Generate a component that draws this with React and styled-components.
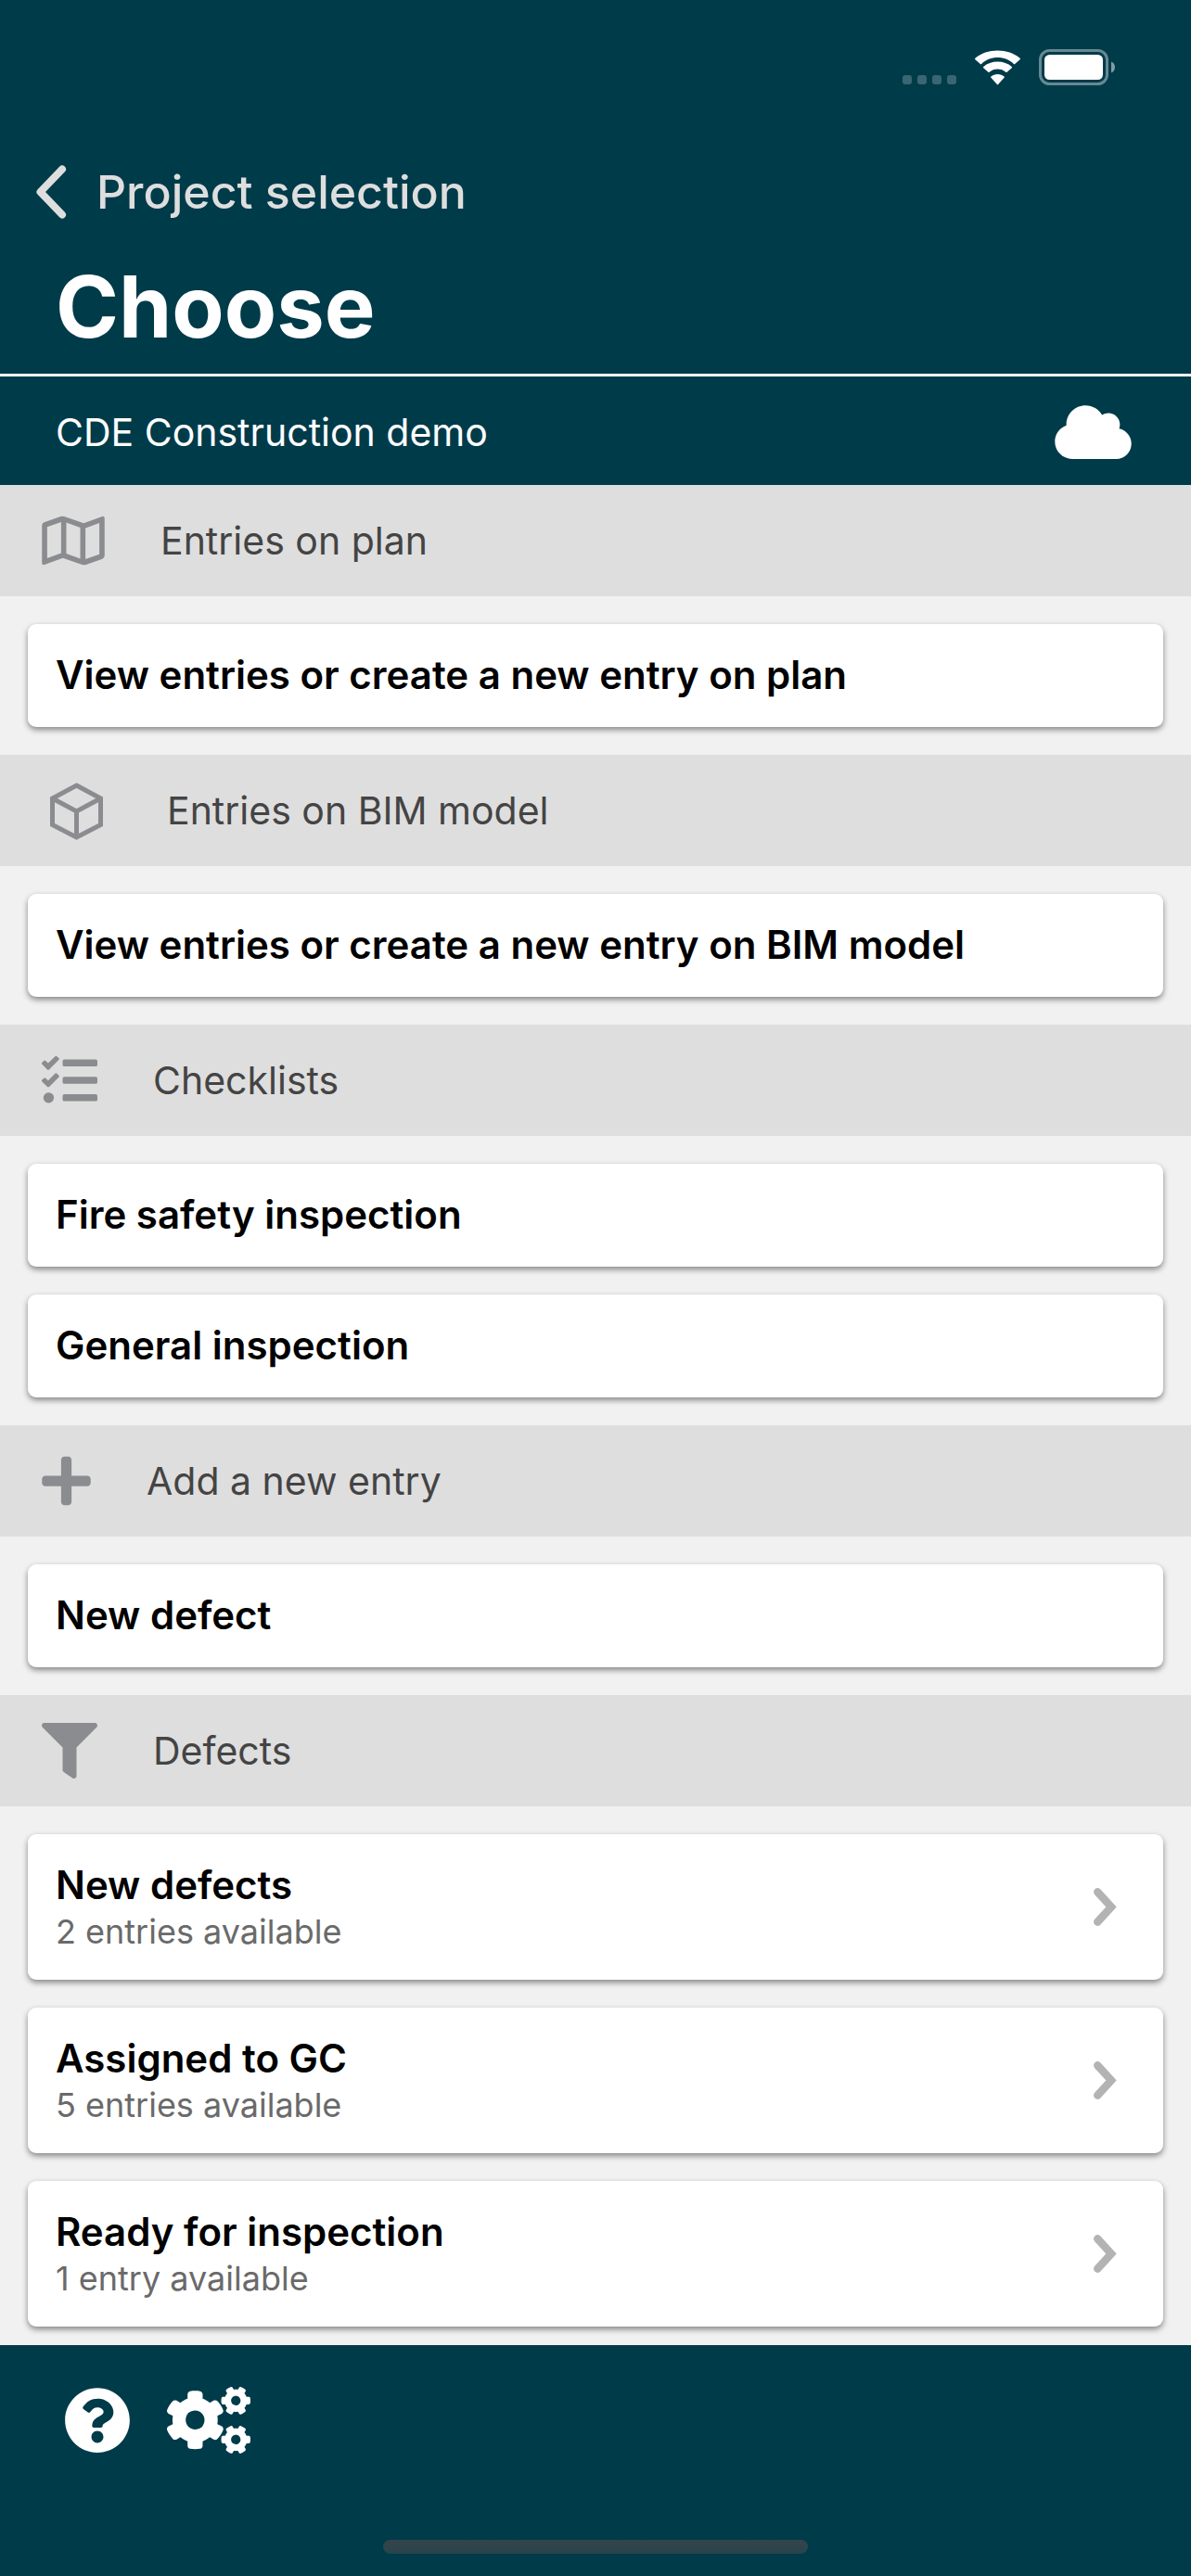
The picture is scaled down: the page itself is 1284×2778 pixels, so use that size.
import styled, { createGlobalStyle } from "styled-components";
import {
  FaCloud,
  FaCogs,
  FaFilter,
  FaPlus,
  FaQuestionCircle,
  FaRegMap,
  FaTasks,
} from "react-icons/fa";

const GlobalStyles = createGlobalStyle`
  :root {
    --color-brand: #003b4a;
    --color-white: #fff;
    --color-grey-50: #f1f1f1;
    --color-grey-200: #dedede;
    --color-grey-400: #b3b3b3;
    --color-grey-500: #8b8c90;
    --color-grey-600: #6a6a6a;
    --color-grey-700: #444;
    --font-size-sm: 36px;
    --font-size-base: 41px;
    --font-size-md: 42px;
    --font-size-lg: 50px;
    --font-size-xl: 92px;
  }

  *, *::before, *::after {
    box-sizing: border-box;
    margin: 0;
    padding: 0;
  }

  body {
    background-color: var(--color-brand);
    font-family: Inter, Roboto, "Liberation Sans", sans-serif;
    font-size: var(--font-size-base);
  }

  button {
    border: none;
    background: none;
    font: inherit;
    color: inherit;
    cursor: pointer;
  }
`;

const StyledApp = styled.div`
  display: flex;
  flex-direction: column;
  height: 100vh;
`;

const StatusBar = styled.div`
  display: flex;
  justify-content: flex-end;
  align-items: flex-end;
  gap: 19px;
  height: 141px;
  padding: 0 82px 49px;
`;

const SignalDots = styled.div`
  display: flex;
  gap: 6px;
  padding-bottom: 1px;

  > span {
    width: 10px;
    height: 10px;
    border-radius: 3px;
    background-color: rgba(255, 255, 255, 0.22);
  }
`;

const Header = styled.header`
  flex-shrink: 0;
  color: var(--color-white);
  border-bottom: 3px solid var(--color-white);
`;

const BackLink = styled.a`
  display: inline-flex;
  align-items: center;
  gap: 32px;
  height: 132px;
  padding-left: 39px;
  color: var(--color-grey-200);
  font-size: var(--font-size-lg);
  font-weight: 500;
  text-decoration: none;
`;

const Title = styled.h1`
  height: 130px;
  padding: 0 60px;
  font-size: var(--font-size-xl);
  font-weight: 700;
  line-height: 116px;
`;

const ProjectBar = styled.div`
  display: flex;
  flex-shrink: 0;
  justify-content: space-between;
  align-items: center;
  height: 117px;
  padding: 3px 64px 0 60px;
  color: var(--color-white);

  svg {
    width: 83px;
    height: 66px;
  }
`;

const Content = styled.main`
  flex: 1;
  min-height: 0;
  overflow-y: auto;
  scrollbar-width: none;
  background-color: var(--color-grey-50);
`;

const SectionHeader = styled.header`
  display: flex;
  align-items: center;
  gap: 60px;
  height: 120px;
  padding: 0 45px;
  background-color: var(--color-grey-200);
  color: var(--color-grey-500);

  svg {
    flex-shrink: 0;
    width: ${(props) => props.$iconWidth}px;
    height: ${(props) => Math.max(60, props.$iconHeight || 0)}px;
  }

  h2 {
    color: var(--color-grey-700);
    font-size: var(--font-size-base);
    font-weight: 400;
  }
`;

const CardList = styled.ul`
  display: flex;
  flex-direction: column;
  gap: 30px;
  padding: 30px;
  list-style: none;
`;

const StyledCard = styled.button`
  display: flex;
  justify-content: space-between;
  align-items: center;
  width: 100%;
  padding: 30px 50px 31px 30px;
  border-radius: 9px;
  background-color: var(--color-white);
  box-shadow: 0 3px 6px rgba(0, 0, 0, 0.45);
  text-align: left;
`;

const CardTitle = styled.span`
  display: block;
  color: #000;
  font-size: var(--font-size-md);
  font-weight: 600;
  line-height: 50px;
`;

const CardInfo = styled.span`
  display: block;
  margin-top: 4px;
  color: var(--color-grey-600);
  font-size: var(--font-size-sm);
  line-height: 42px;
`;

const Footer = styled.footer`
  display: flex;
  flex-direction: column;
  flex-shrink: 0;
  justify-content: space-between;
  align-items: center;
  height: 249px;
  padding: 45px 69px 24px;
  color: var(--color-white);
`;

const Toolbar = styled.div`
  display: flex;
  align-self: stretch;
  gap: 39px;
`;

const ToolButton = styled.button`
  display: flex;

  svg {
    width: ${(props) => (props.$wide ? "90px" : "72px")};
    height: 72px;
  }
`;

const HomeIndicator = styled.div`
  width: 40%;
  max-width: 459px;
  height: 15px;
  border-radius: 8px;
  background: linear-gradient(#36444b, #28444c);
`;

function WifiIcon() {
  return (
    <svg width="51" height="38" viewBox="0 0 51 38" fill="currentColor">
      <path d="M25.500 8c6.700 0 12.800 2.600 17.400 6.900.4.300.9.300 1.200 0l5.500-4.700c.5-.4.500-1 0-1.400C43.300 3.200 34.800.5 25.500.5S7.700 3.200 1.400 8.800c-.5.400-.5 1 0 1.400l5.500 4.700c.3.300.8.300 1.200 0C12.700 10.600 18.800 8 25.500 8z" />
      <path d="M25.500 20.500c3.400 0 6.500 1.200 8.900 3.300.4.300.9.300 1.200 0l5.200-4.500c.4-.4.400-1 0-1.400-4-3.500-9.400-5.400-15.300-5.400s-11.300 1.900-15.300 5.400c-.4.400-.4 1 0 1.400l5.200 4.500c.3.300.8.300 1.200 0 2.400-2.100 5.500-3.300 8.900-3.300z" />
      <path d="M25.500 26c-2.700 0-5.200.9-7.100 2.400-.4.400-.4.900 0 1.300l6.500 7.300c.3.400.8.400 1.200 0l6.500-7.300c.4-.4.400-.9 0-1.300-1.900-1.500-4.400-2.400-7.100-2.400z" />
    </svg>
  );
}

function BatteryIcon() {
  return (
    <svg width="82" height="39" viewBox="0 0 82 39" fill="currentColor">
      <rect
        x="1.5"
        y="1.5"
        width="72"
        height="36"
        rx="10"
        fill="none"
        stroke="currentColor"
        strokeWidth="3"
        opacity="0.4"
      />
      <rect x="6" y="6" width="63" height="27" rx="5.5" />
      <path d="M78 13.500c2.500 1 4 3.300 4 6s-1.500 5-4 6z" opacity="0.5" />
    </svg>
  );
}

function BackIcon() {
  return (
    <svg
      width="33"
      height="58"
      viewBox="0 0 33 58"
      fill="none"
      stroke="currentColor"
      strokeWidth="8"
      strokeLinecap="round"
      strokeLinejoin="round"
    >
      <path d="M28 4.500 4.500 29 28 53.500" />
    </svg>
  );
}

function ForwardIcon() {
  return (
    <svg
      width="25"
      height="41"
      viewBox="0 0 25 41"
      fill="none"
      stroke="#b3b3b3"
      strokeWidth="8.5"
      strokeLinecap="round"
    >
      <path d="M4.300 4.300 19 20.500 4.300 36.700" />
    </svg>
  );
}

function BoxIcon() {
  return (
    <svg viewBox="0 0 75 75" fill="none" stroke="currentColor" strokeWidth="5">
      <path d="M37.500 10 63.500 24v28.500l-26 13.500-26-13.500V24z" />
      <path d="m11.500 24 26 14 26-14M37.500 38v28" />
    </svg>
  );
}

const sections = [
  {
    title: "Entries on plan",
    icon: <FaRegMap />,
    iconWidth: 68,
    cards: [{ title: "View entries or create a new entry on plan" }],
  },
  {
    title: "Entries on BIM model",
    icon: <BoxIcon />,
    iconWidth: 75,
    iconHeight: 75,
    cards: [{ title: "View entries or create a new entry on BIM model" }],
  },
  {
    title: "Checklists",
    icon: <FaTasks />,
    iconWidth: 60,
    cards: [{ title: "Fire safety inspection" }, { title: "General inspection" }],
  },
  {
    title: "Add a new entry",
    icon: <FaPlus />,
    iconWidth: 53,
    cards: [{ title: "New defect" }],
  },
  {
    title: "Defects",
    icon: <FaFilter />,
    iconWidth: 60,
    cards: [
      { title: "New defects", info: "2 entries available" },
      { title: "Assigned to GC", info: "5 entries available" },
      { title: "Ready for inspection", info: "1 entry available" },
    ],
  },
];

function Card({ title, info }) {
  return (
    <li>
      <StyledCard type="button">
        <span>
          <CardTitle>{title}</CardTitle>
          {info && <CardInfo>{info}</CardInfo>}
        </span>
        {info && <ForwardIcon />}
      </StyledCard>
    </li>
  );
}

function Section({ title, icon, iconWidth, iconHeight, cards }) {
  return (
    <section>
      <SectionHeader $iconWidth={iconWidth} $iconHeight={iconHeight}>
        {icon}
        <h2>{title}</h2>
      </SectionHeader>
      <CardList>
        {cards.map((card) => (
          <Card key={card.title} {...card} />
        ))}
      </CardList>
    </section>
  );
}

function App() {
  return (
    <>
      <GlobalStyles />
      <StyledApp>
        <Header>
          <StatusBar>
            <SignalDots>
              <span />
              <span />
              <span />
              <span />
            </SignalDots>
            <WifiIcon />
            <BatteryIcon />
          </StatusBar>
          <BackLink href="#projects">
            <BackIcon />
            Project selection
          </BackLink>
          <Title>Choose</Title>
        </Header>

        <ProjectBar>
          <p>CDE Construction demo</p>
          <FaCloud />
        </ProjectBar>

        <Content>
          {sections.map((section) => (
            <Section key={section.title} {...section} />
          ))}
        </Content>

        <Footer>
          <Toolbar>
            <ToolButton type="button" aria-label="Help">
              <FaQuestionCircle />
            </ToolButton>
            <ToolButton type="button" aria-label="Settings" $wide>
              <FaCogs />
            </ToolButton>
          </Toolbar>
          <HomeIndicator />
        </Footer>
      </StyledApp>
    </>
  );
}

export default App;
